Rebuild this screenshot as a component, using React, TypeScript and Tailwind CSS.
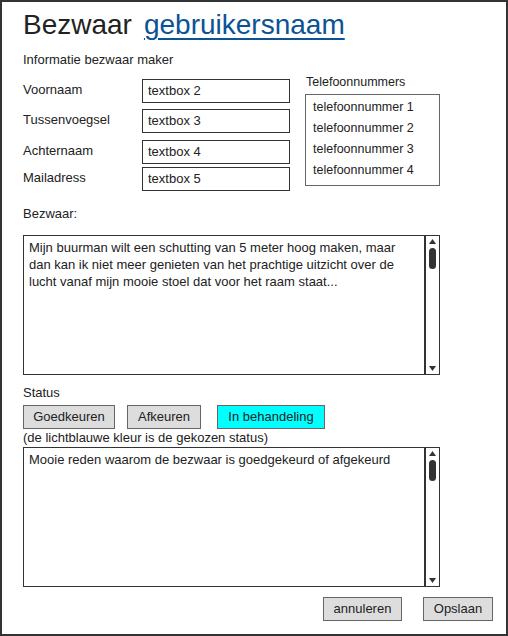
import React from 'react'

const FONT = { fontFamily: '"Liberation Sans", Arial, sans-serif' }

function TextBox({ text }: { text: string }) {
  return (
    <div className="h-[24px] w-[148px] border border-[#333] bg-white pl-[5px] text-[13px] leading-[22px] text-[#222]">
      {text}
    </div>
  )
}

function ScrollArea({ height, children }: { height: string; children: React.ReactNode }) {
  return (
    <div className={`flex w-[417px] border border-[#333] bg-white ${height}`}>
      <div className="flex-1 px-[5px] pt-[3px] text-[13px] leading-[17px] text-[#222]">{children}</div>
      <div className="relative w-[15px] border-l-2 border-[#333]">
        {/* up arrow */}
        <svg className="absolute left-[3px] top-[3px]" width="7" height="5" viewBox="0 0 7 5">
          <path d="M0 5 L3.5 0 L7 5 Z" fill="#333" />
        </svg>
        {/* thumb */}
        <div className="absolute left-[3px] top-[12px] h-[21px] w-[7px] rounded-full bg-[#333]" />
        {/* down arrow */}
        <svg className="absolute bottom-[3px] left-[3px]" width="7" height="5" viewBox="0 0 7 5">
          <path d="M0 0 L3.5 5 L7 0 Z" fill="#333" />
        </svg>
      </div>
    </div>
  )
}

function Btn({ label, w, active }: { label: string; w: string; active?: boolean }) {
  return (
    <div
      className={`flex h-[24px] items-center justify-center border border-[#666] text-[13px] text-[#222] ${w} ${
        active ? 'bg-[#00ffff]' : 'bg-[#dddddd]'
      }`}
    >
      {label}
    </div>
  )
}

export default function App() {
  return (
    <div
      className="flex h-[636px] w-[508px] flex-col border-2 border-[#333] bg-white pl-[21px] pr-[13px] text-[#222]"
      style={FONT}
    >
      {/* title */}
      <div className="mt-[6px] flex items-baseline gap-[12px] text-[28px] leading-[34px]">
        <span className="text-[#222]">Bezwaar</span>
        <span className="text-[#0b5394] underline decoration-[2px] underline-offset-[4px]">gebruikersnaam</span>
      </div>

      <div className="mt-[10px] text-[13px] leading-[15px]">Informatie bezwaar maker</div>

      <div className="mt-[8px] flex">
        {/* left form */}
        <div className="flex w-[282px] flex-col">
          <div className="mt-[4px] flex items-start">
            <span className="w-[119px] pt-[1px] text-[13px]">Voornaam</span>
            <TextBox text="textbox 2" />
          </div>
          <div className="mt-[6px] flex items-start">
            <span className="w-[119px] pt-[1px] text-[13px]">Tussenvoegsel</span>
            <TextBox text="textbox 3" />
          </div>
          <div className="mt-[7px] flex items-start">
            <span className="w-[119px] pt-[1px] text-[13px]">Achternaam</span>
            <TextBox text="textbox 4" />
          </div>
          <div className="mt-[3px] flex items-start">
            <span className="w-[119px] pt-[1px] text-[13px]">Mailadress</span>
            <TextBox text="textbox 5" />
          </div>
        </div>

        {/* right list */}
        <div className="flex flex-col">
          <span className="pl-[1px] text-[12.5px] leading-[15px]">Telefoonnummers</span>
          <div className="mt-[4px] flex h-[92px] w-[135px] flex-col border border-[#666] bg-white pl-[7px] pt-[2px] text-[12.5px] leading-[21px]">
            <span>telefoonnummer 1</span>
            <span>telefoonnummer 2</span>
            <span>telefoonnummer 3</span>
            <span>telefoonnummer 4</span>
          </div>
        </div>
      </div>

      <div className="mt-[15px] text-[13px] leading-[15px]">Bezwaar:</div>

      <div className="mt-[14px]">
        <ScrollArea height="h-[140px]">
          Mijn buurman wilt een schutting van 5 meter hoog maken, maar dan kan ik niet meer genieten van het prachtige
          uitzicht over de lucht vanaf mijn mooie stoel dat voor het raam staat...
        </ScrollArea>
      </div>

      <div className="mt-[10px] text-[13px] leading-[15px]">Status</div>

      <div className="mt-[5px] flex">
        <Btn label="Goedkeuren" w="w-[92px]" />
        <div className="ml-[12px]">
          <Btn label="Afkeuren" w="w-[74px]" />
        </div>
        <div className="ml-[16px]">
          <Btn label="In behandeling" w="w-[108px]" active />
        </div>
      </div>

      <div className="mt-[1px] text-[13px] leading-[16px]">(de lichtblauwe kleur is de gekozen status)</div>

      <div className="mt-[1px]">
        <ScrollArea height="h-[140px]">Mooie reden waarom de bezwaar is goedgekeurd of afgekeurd</ScrollArea>
      </div>

      <div className="mt-[10px] flex justify-end">
        <Btn label="annuleren" w="w-[79px]" />
        <div className="ml-[21px]">
          <Btn label="Opslaan" w="w-[70px]" />
        </div>
      </div>
    </div>
  )
}
